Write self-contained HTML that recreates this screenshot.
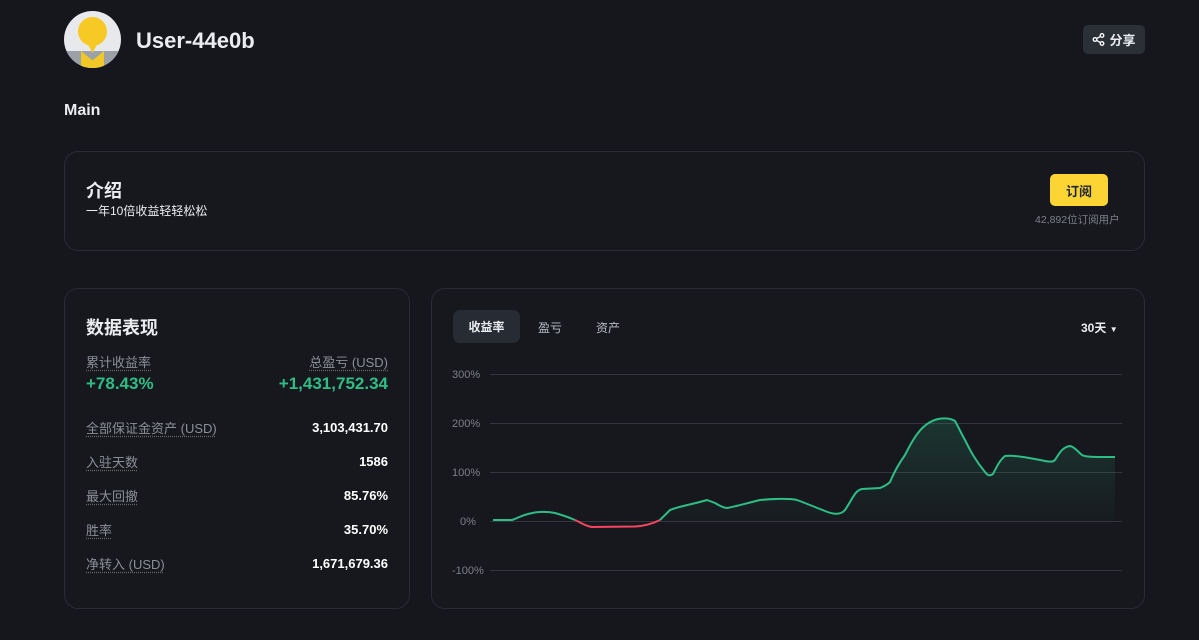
<!DOCTYPE html>
<html><head><meta charset="utf-8"><style>
*{margin:0;padding:0;box-sizing:border-box}
body{width:1199px;height:640px;background:#16171d;color:#eaecef;font-family:"Liberation Sans","Noto Sans CJK SC",sans-serif;position:relative;overflow:hidden}
.abs{position:absolute}
.card{position:absolute;border:1px solid #2a2c33;border-radius:14px;background:#17181e}
.lbl{color:#8b8f98;font-size:13px;text-decoration:underline dotted #666;text-underline-offset:3px}
.row{position:absolute;left:21px;right:21px;display:flex;justify-content:space-between;align-items:center;font-size:13px}
.row b{color:#fff;font-weight:bold}
.g{color:#2ebd85;font-weight:bold;font-size:17px}
.yl{position:absolute;left:20px;font-size:11px;color:#7d8088}
.gl{position:absolute;left:58px;right:22px;height:1px;background:#33353c}
</style></head><body>
<div class="abs" style="left:64px;top:11px;width:57px;height:57px;border-radius:50%;background:#e8e9ec;overflow:hidden">
 <div class="abs" style="left:0;top:40px;width:57px;height:17px;background:#9ca0a8"></div>
 <div class="abs" style="left:17px;top:40px;width:23px;height:17px;background:#f0c929;clip-path:polygon(0 0,50% 55%,100% 0,100% 100%,0 100%)"></div>
 <div class="abs" style="left:14px;top:6px;width:29px;height:29px;border-radius:50%;background:#f6c925"></div>
 <div class="abs" style="left:21px;top:28px;width:15px;height:14px;background:#f6c925;clip-path:polygon(0 0,100% 0,50% 100%)"></div>
</div>
<div class="abs" style="left:136px;top:28px;font-size:22px;font-weight:bold">User-44e0b</div>
<div class="abs" style="left:1083px;top:25px;width:62px;height:29px;border-radius:5px;background:#2b2f36;font-size:13px;font-weight:bold;display:flex;align-items:center;justify-content:center;gap:4px">
<svg width="13" height="13" viewBox="0 0 13 13" fill="none" stroke="#fff" stroke-width="1.3"><circle cx="10" cy="2.5" r="1.8"/><circle cx="10" cy="10.5" r="1.8"/><circle cx="3" cy="6.5" r="1.8"/><path d="M4.6 5.6L8.4 3.4M4.6 7.4L8.4 9.6"/></svg>分享</div>
<div class="abs" style="left:64px;top:102px;font-size:16px;font-weight:bold">Main</div>

<div class="card" style="left:64px;top:151px;width:1081px;height:100px">
 <div class="abs" style="left:21px;top:25px;font-size:18px;font-weight:bold">介绍</div>
 <div class="abs" style="left:21px;top:50px;font-size:12px">一年10倍收益轻轻松松</div>
 <div class="abs" style="left:985px;top:22px;width:58px;height:32px;border-radius:5px;background:#fcd535;color:#202630;font-size:13px;font-weight:bold;display:flex;align-items:center;justify-content:center">订阅</div>
 <div class="abs" style="left:970px;top:60px;font-size:10.5px;color:#7d8088">42,892位订阅用户</div>
</div>

<div class="card" style="left:64px;top:288px;width:346px;height:321px">
 <div class="abs" style="left:21px;top:25px;font-size:18px;font-weight:bold">数据表现</div>
 <div class="row" style="top:63px"><span class="lbl">累计收益率</span><span class="lbl">总盈亏 (USD)</span></div>
 <div class="row" style="top:85px"><span class="g">+78.43%</span><span class="g">+1,431,752.34</span></div>
 <div class="row" style="top:129px"><span class="lbl">全部保证金资产 (USD)</span><b>3,103,431.70</b></div>
 <div class="row" style="top:163px"><span class="lbl">入驻天数</span><b>1586</b></div>
 <div class="row" style="top:197px"><span class="lbl">最大回撤</span><b>85.76%</b></div>
 <div class="row" style="top:231px"><span class="lbl">胜率</span><b>35.70%</b></div>
 <div class="row" style="top:265px"><span class="lbl">净转入 (USD)</span><b>1,671,679.36</b></div>
</div>

<div class="card" style="left:431px;top:288px;width:714px;height:321px">
 <div class="abs" style="left:21px;top:21px;width:67px;height:33px;border-radius:7px;background:#272b33;font-size:12px;font-weight:bold;display:flex;align-items:center;justify-content:center">收益率</div>
 <div class="abs" style="left:106px;top:30px;font-size:12px;color:#b7bdc6">盈亏</div>
 <div class="abs" style="left:164px;top:30px;font-size:12px;color:#b7bdc6">资产</div>
 <div class="abs" style="left:649px;top:30px;font-size:12px;font-weight:bold">30天 <span style="font-size:8px">▼</span></div>
 <div class="yl" style="top:80px">300%</div><div class="gl" style="top:85px"></div>
 <div class="yl" style="top:129px">200%</div><div class="gl" style="top:134px"></div>
 <div class="yl" style="top:178px">100%</div><div class="gl" style="top:183px"></div>
 <div class="yl" style="top:227px;left:28px">0%</div><div class="gl" style="top:232px"></div>
 <div class="yl" style="top:276px">-100%</div><div class="gl" style="top:281px"></div>
</div>
<svg class="abs" style="left:0;top:0" width="1199" height="640">
<defs><linearGradient id="gr" x1="0" y1="0" x2="0" y2="1"><stop offset="0" stop-color="#2ebd85" stop-opacity="0.18"/><stop offset="1" stop-color="#2ebd85" stop-opacity="0.02"/></linearGradient></defs>
<path d="M660 521 L670 510 C680 506 690 505 707 500 L715 503 C720 506 724 508 727 508 C733 507 740 505 760 500 C770 499 790 498 797 500 C805 503 815 507 825 511 C832 514 840 516 845 510 C852 500 855 490 862 489 L880 488 C885 486 888 484 890 482 C895 470 900 462 905 455 C910 445 914 438 918 433 C924 425 930 421 938 419 C945 418 950 418 955 421 C960 430 962 435 965 440 C970 450 975 460 985 472 C988 476 990 476 993 474 C997 466 1000 460 1005 456 C1015 455 1030 458 1045 461 C1050 462 1053 462 1055 460 C1060 452 1063 447 1070 446 C1075 447 1078 452 1082 455 C1086 457 1090 457 1115 457 L1115 521 Z" fill="url(#gr)"/>
<path d="M493 520 L512 520 C518 518 520 516 528 514 C535 512 545 511 555 513 C562 515 568 517 575 520" fill="none" stroke="#2ebd85" stroke-width="2"/>
<path d="M575 520 C580 522 585 526 592 527 L635 526.5 C645 526 652 524 660 520" fill="none" stroke="#f6465d" stroke-width="2"/>
<path d="M660 520 L670 510 C680 506 690 505 707 500 L715 503 C720 506 724 508 727 508 C733 507 740 505 760 500 C770 499 790 498 797 500 C805 503 815 507 825 511 C832 514 840 516 845 510 C852 500 855 490 862 489 L880 488 C885 486 888 484 890 482 C895 470 900 462 905 455 C910 445 914 438 918 433 C924 425 930 421 938 419 C945 418 950 418 955 421 C960 430 962 435 965 440 C970 450 975 460 985 472 C988 476 990 476 993 474 C997 466 1000 460 1005 456 C1015 455 1030 458 1045 461 C1050 462 1053 462 1055 460 C1060 452 1063 447 1070 446 C1075 447 1078 452 1082 455 C1086 457 1090 457 1115 457" fill="none" stroke="#2ebd85" stroke-width="2"/>
</svg>
</body></html>
